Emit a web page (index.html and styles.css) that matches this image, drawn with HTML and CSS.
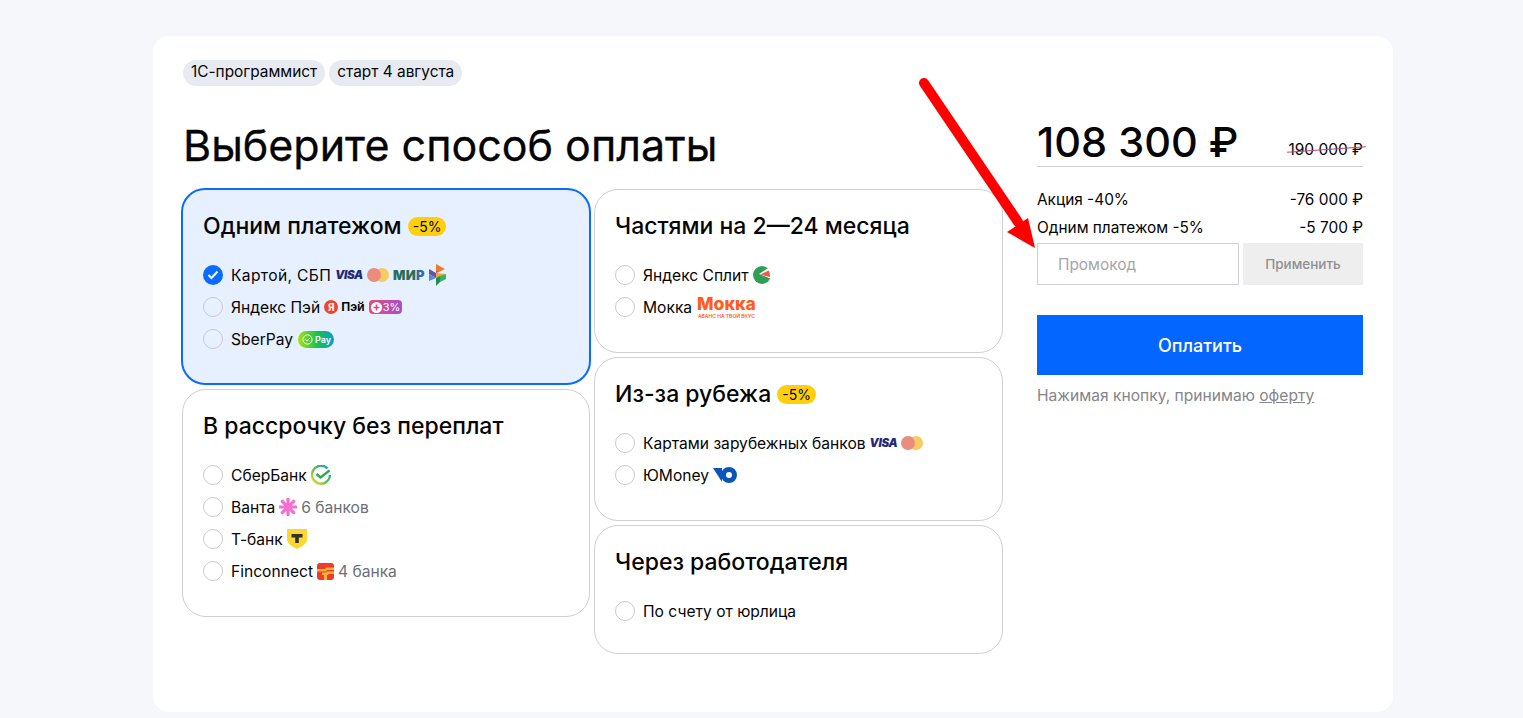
FILE: index.html
```html
<!DOCTYPE html>
<html lang="ru">
<head>
	<meta charset="utf-8">
	<title>Выберите способ оплаты</title>
	<link rel="stylesheet" href="styles.css">
</head>
<body>
	<div class="sheet">
		<div class="tags">
			<span class="tag">1С-программист</span>
			<span class="tag">старт 4 августа</span>
		</div>
		<div class="columns">
			<div class="main">
				<h1>Выберите способ оплаты</h1>
				<div class="methods">
					<div class="methodcol">
						<div class="method active">
							<h2>Одним платежом <span class="sale">-5%</span></h2>
							<div class="row"><span class="radio checked"><svg width="12" height="10" viewBox="0 0 12 10"><path d="M1.5 5l3 3 6-6.5" fill="none" stroke="#fff" stroke-width="2"/></svg></span><span class="stretch">Картой, СБП</span>
								<span class="visa">VISA</span>
								<svg class="mc" width="22" height="14" viewBox="0 0 22 14"><circle cx="15" cy="7" r="7" fill="#f5cb62"/><circle cx="7" cy="7" r="7" fill="#ea8c7e"/></svg>
								<span class="mir">МИ<b>Р</b></span>
								<svg class="ico" width="17" height="22" viewBox="0 0 17 22"><path d="M7 0l9 5-6 3-3-2z" fill="#ee7a2a"/><path d="M0 5l7 4v5l-7-4z" fill="#5b57a2"/><path d="M7 1v5l3 2-3 1z" fill="#d9453a"/><path d="M0 10l7 4-7 3z" fill="#4f8fd8"/><path d="M7 9l10 1-10 4z" fill="#f0a23c"/><path d="M7 14l4-2v6l-4 4z" fill="#1f8f4c"/><path d="M11 12l6-2v5l-6 3z" fill="#35b35f"/></svg>
							</div>
							<div class="row"><span class="radio"></span>Яндекс Пэй
								<span class="ya">Я</span><span class="yapay">Пэй</span>
								<span class="plus"><svg width="11" height="11" viewBox="0 0 11 11"><circle cx="5.5" cy="5.5" r="5.5" fill="#fff"/><path d="M5.5 2.5v6M2.5 5.5h6" stroke="#d9478c" stroke-width="1.6"/></svg>3%</span>
							</div>
							<div class="row"><span class="radio"></span>SberPay
								<span class="sberpay"><svg width="11" height="11" viewBox="0 0 11 11"><circle cx="5.5" cy="5.5" r="4.6" fill="none" stroke="#fff" stroke-width=".9"/><path d="M3.3 5.4l1.7 1.7 3-3.2" fill="none" stroke="#fff"/></svg>Pay</span>
							</div>
						</div>
						<div class="method">
							<h2>В рассрочку без переплат</h2>
							<div class="row"><span class="radio"></span>СберБанк
								<svg class="ico" width="20" height="20" viewBox="0 0 20 20"><defs><linearGradient id="sber" x1="0" y1="1" x2="1" y2="0"><stop offset="0" stop-color="#f5e02a"/><stop offset=".45" stop-color="#5cc04a"/><stop offset="1" stop-color="#1a9be6"/></linearGradient></defs><path d="M16.500 3.500A9 9 0 1 0 19 10" fill="none" stroke="url(#sber)" stroke-width="2.400"/><path d="M5.500 9l4 3.500 9-7" fill="none" stroke="#2fa84f" stroke-width="2.400"/></svg>
							</div>
							<div class="row"><span class="radio"></span>Ванта
								<svg class="ico" width="18" height="18" viewBox="0 0 18 18"><path d="M9 1v16M1 9h16M3.300 3.300l11.400 11.400M14.700 3.300L3.300 14.700" stroke="#f56fd0" stroke-width="3.200" stroke-linecap="round"/></svg>
								<span class="muted">6 банков</span>
							</div>
							<div class="row"><span class="radio"></span>Т-банк
								<svg class="ico" width="20" height="20" viewBox="0 0 20 20"><path d="M0 0h20v10c0 5-6 8-10 10C6 18 0 15 0 10z" fill="#fbd72f"/><path d="M4.500 5h11v3.500h-3.700V14H8.200V8.500H4.500z" fill="#33302a"/></svg>
							</div>
							<div class="row"><span class="radio"></span>Finconnect
								<svg class="ico" width="17" height="17" viewBox="0 0 17 17"><rect width="17" height="17" rx="3" fill="#ee3b2f"/><path d="M0 6h8l1-1.500h8V7H10L9 8.500H0zM5 9.500h4l1-1h7V11h-5.500l-.8 1H10v5H7v-5H5z" fill="#f9b233"/></svg>
								<span class="muted">4 банка</span>
							</div>
						</div>
					</div>
					<div class="methodcol wide">
						<div class="method">
							<h2>Частями на 2—24 месяца</h2>
							<div class="row"><span class="radio"></span>Яндекс Сплит
								<svg class="ico" width="18" height="18" viewBox="0 0 18 18"><circle cx="9" cy="9" r="9" fill="#2f9e57"/><path d="M6 8L16 1.500 18.500 5V13z" fill="#fff"/><path d="M7.500 8.500L15.500 4.500c1.300 1.800 1.700 4 1.300 6.500z" fill="#ef5a4a"/></svg>
							</div>
							<div class="row"><span class="radio"></span>Мокка
								<span class="mokka">Мокка<small>АВАНС НА ТВОЙ ВКУС</small></span>
							</div>
						</div>
						<div class="method">
							<h2>Из-за рубежа <span class="sale">-5%</span></h2>
							<div class="row"><span class="radio"></span>Картами зарубежных банков
								<span class="visa">VISA</span>
								<svg class="mc" width="22" height="14" viewBox="0 0 22 14"><circle cx="15" cy="7" r="7" fill="#f5cb62"/><circle cx="7" cy="7" r="7" fill="#ea8c7e"/></svg>
							</div>
							<div class="row"><span class="radio"></span>ЮMoney
								<svg class="ico" width="24" height="16" viewBox="0 0 24 16"><path d="M0 1h9v14z" fill="#0a56b8"/><circle cx="16" cy="8" r="5.500" fill="none" stroke="#0a56b8" stroke-width="5"/></svg>
							</div>
						</div>
						<div class="method last">
							<h2>Через работодателя</h2>
							<div class="row"><span class="radio"></span>По счету от юрлица</div>
						</div>
					</div>
				</div>
			</div>
			<div class="summary">
				<div class="pricerow">
					<span class="price">108 300 ₽</span>
					<span class="oldprice">190 000 ₽</span>
				</div>
				<div class="line"><span>Акция -40%</span><span>-76 000 ₽</span></div>
				<div class="line"><span>Одним платежом -5%</span><span>-5 700 ₽</span></div>
				<div class="promo">
					<input class="promoinput" type="text" placeholder="Промокод">
					<button class="promobutton">Применить</button>
				</div>
				<button class="paybutton">Оплатить</button>
				<p class="note">Нажимая кнопку, принимаю <a href="#">оферту</a></p>
			</div>
		</div>
		<svg class="arrow" width="120" height="180" viewBox="0 0 120 180"><path d="M7 7L101 146" fill="none" stroke="#fe0000" stroke-width="10" stroke-linecap="round"/><path d="M118 172L90 156 111 142z" fill="#fe0000"/></svg>
	</div>
</body>
</html>
```

FILE: styles.css
```css
* {
	box-sizing: border-box;
}

body {
	margin: 0;
	height: 718px;
	overflow: hidden;
	background-color: #f5f7fb;
	font-family: Inter, "Noto Sans", sans-serif;
	color: #050505;
}

.sheet {
	position: relative;
	width: 1240px;
	height: 676px;
	margin: 36px 0 0 153px;
	padding: 24px 30px 0 29px;
	background-color: white;
	border-radius: 16px;
}

.tags {
	display: flex;
	gap: 4px;
	height: 26px;
	padding-left: 1px;
}

.tag {
	padding: 0 8px;
	border-radius: 13px;
	background-color: #e8eaf1;
	font-size: 15.4px;
	line-height: 24px;
}

.columns {
	display: flex;
	gap: 34px;
	margin-top: 31px;
}

h1 {
	margin: 0 0 16px 1px;
	font-size: 43px;
	font-weight: 400;
	line-height: 56px;
	-webkit-text-stroke: .3px #050505;
}

.methods {
	display: flex;
	gap: 4px;
}

.methodcol {
	display: flex;
	flex-direction: column;
	gap: 4px;
	width: 408px;
}

.methodcol.wide {
	width: 409px;
}

.method {
	padding: 21px 20px 29px;
	border: 1px solid #cfcfd4;
	border-radius: 24px;
}

.method.active {
	margin: -1px -1px 0;
	padding-bottom: 28px;
	border: 2px solid #0a6cff;
	background-color: #e6f0fe;
}

.method.last {
	padding-bottom: 26px;
}

h2 {
	margin: 0 0 18px;
	font-size: 23px;
	font-weight: 500;
	line-height: 30px;
}

.sale {
	display: inline-block;
	padding: 0 5px;
	border-radius: 10px;
	background-color: #ffcf0d;
	font-size: 14px;
	font-weight: 400;
	line-height: 19px;
	vertical-align: 2px;
}

.row {
	display: flex;
	align-items: center;
	gap: 4px;
	height: 32px;
	font-size: 15.6px;
}

.stretch {
	letter-spacing: .35px;
}

.radio {
	display: flex;
	align-items: center;
	justify-content: center;
	flex: none;
	width: 20px;
	height: 20px;
	margin-right: 4px;
	border: 1px solid #c9c9d0;
	border-radius: 50%;
}

.radio.checked {
	border: none;
	background-color: #0a6cff;
}

.ico {
	flex: none;
}

.muted {
	color: #6b6f76;
}

.visa {
	color: #1f2a78;
	font-size: 11.5px;
	font-weight: 900;
	font-style: italic;
	letter-spacing: -.3px;
}

.mir {
	color: #2a6e5a;
	font-size: 13px;
	font-weight: 900;
	letter-spacing: .3px;
}

.mir b {
	color: #2b6ea8;
}

.ya {
	width: 14px;
	height: 14px;
	border-radius: 50%;
	background-color: #f0452b;
	color: white;
	font-size: 10px;
	font-weight: 700;
	line-height: 14px;
	text-align: center;
}

.yapay {
	margin-left: -1px;
	font-family: "Liberation Sans", sans-serif;
	font-size: 12.5px;
	font-weight: 700;
}

.plus {
	display: flex;
	align-items: center;
	gap: 1px;
	height: 14px;
	padding: 0 2px;
	border-radius: 4px;
	background: linear-gradient(90deg, #ee4a6d, #a54ed6);
	color: white;
	font-size: 11px;
}

.sberpay {
	display: flex;
	align-items: center;
	gap: 2px;
	height: 17px;
	margin-left: 1px;
	padding: 0 3px 0 4px;
	border-radius: 9px;
	background: linear-gradient(90deg, #a8e01a, #12c24e 55%, #0f9bd0);
	color: white;
	font-size: 9px;
	font-weight: 600;
}

.mokka {
	display: flex;
	flex-direction: column;
	align-items: center;
	margin-left: 1px;
	color: #ff5c22;
	font-size: 17.5px;
	font-weight: 800;
	line-height: 18px;
	font-variant: small-caps;
}

.mokka small {
	font-size: 5px;
	font-weight: 600;
	line-height: 6px;
	font-variant: normal;
}

.summary {
	width: 326px;
}

.pricerow {
	display: flex;
	justify-content: space-between;
	align-items: flex-end;
	height: 50px;
	border-bottom: 1px solid #cfcfd4;
}

.price {
	position: relative;
	top: 2px;
	font-size: 41.5px;
	font-weight: 500;
	line-height: 52px;
}

.oldprice {
	position: relative;
	padding-bottom: 7px;
	font-size: 15.5px;
}

.oldprice:after {
	content: "";
	position: absolute;
	left: -1px;
	right: -3px;
	top: 9px;
	height: 1px;
	background-color: #c8406e;
	transform: rotate(-4deg);
}

.line {
	display: flex;
	justify-content: space-between;
	height: 28px;
	font-size: 15.4px;
	line-height: 28px;
}

.pricerow + .line {
	margin-top: 19px;
}

.promo {
	display: flex;
	gap: 4px;
	height: 42px;
	margin-top: 1px;
}

.promoinput {
	width: 202px;
	padding: 0 20px;
	border: 1px solid #cfcfd4;
	font: 15.4px Inter, sans-serif;
}

.promoinput::placeholder {
	color: #a5a5a8;
}

.promobutton {
	width: 120px;
	border: none;
	background-color: #eeeeee;
	color: #8f8f92;
	font: 500 13.5px Inter, sans-serif;
}

.paybutton {
	display: block;
	width: 326px;
	height: 60px;
	margin-top: 30px;
	padding-top: 2px;
	border: none;
	background-color: #0366ff;
	color: white;
	font: 500 18px Inter, sans-serif;
}

.note {
	margin: 11px 0 0;
	color: #85858a;
	font-size: 15.6px;
	line-height: 20px;
}

.note a {
	color: #85858a;
}

.arrow {
	position: absolute;
	left: 764px;
	top: 40px;
}
```
